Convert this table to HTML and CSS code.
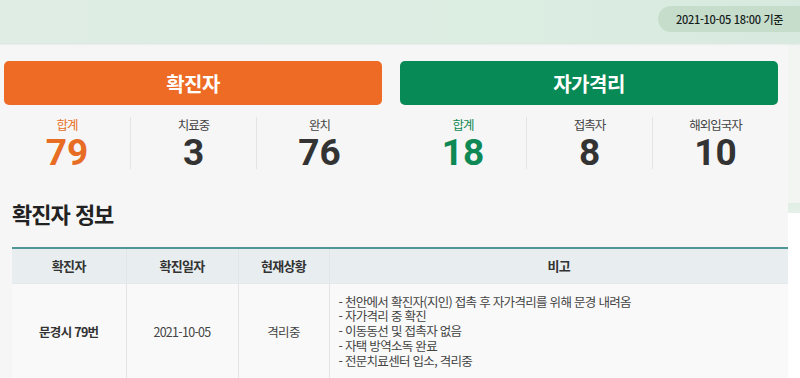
FILE: index.html
```html
<!DOCTYPE html>
<html lang="ko">
<head>
<meta charset="utf-8">
<title>문경시 코로나19 현황</title>
<link rel="stylesheet" href="styles.css">
</head>
<body>
<header class="topbar">
  <span class="pill">2021-10-05 18:00 기준</span>
</header>
<div class="page">
  <main class="content">
    <section class="panels">
      <div class="panel panel-orange">
        <div class="bar">확진자</div>
        <div class="stats">
          <div class="stat stat-total"><span class="label">합계</span><span class="num">79</span></div>
          <div class="stat"><span class="label">치료중</span><span class="num">3</span></div>
          <div class="stat"><span class="label">완치</span><span class="num">76</span></div>
        </div>
      </div>
      <div class="panel panel-green">
        <div class="bar">자가격리</div>
        <div class="stats">
          <div class="stat stat-total"><span class="label">합계</span><span class="num">18</span></div>
          <div class="stat"><span class="label">접촉자</span><span class="num">8</span></div>
          <div class="stat"><span class="label">해외입국자</span><span class="num">10</span></div>
        </div>
      </div>
    </section>
    <h2 class="title">확진자 정보</h2>
    <table class="info">
      <colgroup>
        <col class="c1"><col class="c2"><col class="c3"><col class="c4">
      </colgroup>
      <thead>
        <tr><th>확진자</th><th>확진일자</th><th>현재상황</th><th>비고</th></tr>
      </thead>
      <tbody>
        <tr>
          <td class="name">문경시 79번</td>
          <td>2021-10-05</td>
          <td>격리중</td>
          <td class="remark">
            <p>- 천안에서 확진자(지인) 접촉 후 자가격리를 위해 문경 내려옴</p>
            <p>- 자가격리 중 확진</p>
            <p>- 이동동선 및 접촉자 없음</p>
            <p>- 자택 방역소독 완료</p>
            <p>- 전문치료센터 입소, 격리중</p>
          </td>
        </tr>
      </tbody>
    </table>
  </main>
  <div class="side"></div>
</div>
</body>
</html>
```
FILE: styles.css
```css
* { box-sizing: border-box; }
html, body { margin: 0; padding: 0; }
body {
  width: 800px;
  height: 378px;
  overflow: hidden;
  font-family: "Noto Sans CJK KR", "Noto Sans", sans-serif;
  color: #333;
  background: #f6f6f6;
}
.topbar {
  height: 43px;
  background: linear-gradient(to right, #dfede4, #dcede2 60%, #d8eadf);
  box-shadow: 0 1px 2px rgba(150, 180, 160, 0.35);
  display: flex;
  justify-content: flex-end;
  align-items: flex-start;
  padding-top: 6px;
  position: relative;
  z-index: 1;
}
.pill {
  height: 26px;
  line-height: 26px;
  width: 142px;
  padding-left: 18px;
  border-radius: 13px 0 0 13px;
  background: #c6ddcc;
  font-size: 11px;
  font-weight: 500;
  letter-spacing: -0.3px;
  color: #16211a;
}
.page {
  display: flex;
}
.content {
  width: 788px;
  background: #f6f6f6;
  height: 335px;
}
.side {
  width: 12px;
  height: 335px;
  background: linear-gradient(to bottom, #f3f5f3 0, #f3f5f3 160px, #dfeee4 160px, #e6f1e9 170px, #ffffff 170px);
}
.panels {
  display: grid;
  grid-template-columns: 378px 378px;
  column-gap: 18px;
  padding: 18px 0 0 4px;
}
.bar {
  height: 44px;
  border-radius: 5px;
  color: #fff;
  font-size: 20px;
  font-weight: 700;
  letter-spacing: -0.5px;
  display: flex;
  align-items: center;
  justify-content: center;
}
.panel-orange .bar { background: #ed6b24; }
.panel-green .bar { background: #078a56; }
.stats {
  display: grid;
  grid-template-columns: repeat(3, 1fr);
  margin-top: 12px;
}
.stat {
  display: flex;
  flex-direction: column;
  align-items: center;
  height: 52px;
}
.stat + .stat { border-left: 1px solid #e4e4e4; }
.label {
  font-size: 12.5px;
  line-height: 16px;
  letter-spacing: -1px;
  color: #444;
}
.num {
  font-family: Roboto, "Noto Sans", sans-serif;
  font-weight: 700;
  font-size: 37px;
  line-height: 40px;
  color: #333;
}
.panel-orange .stat-total .label,
.panel-orange .stat-total .num { color: #e86d24; }
.panel-green .stat-total .label,
.panel-green .stat-total .num { color: #0e8854; }
.title {
  margin: 31px 0 0 12px;
  font-size: 22px;
  line-height: 26px;
  font-weight: 700;
  letter-spacing: -1px;
  color: #222;
}
.info {
  margin: 21px 0 0 12px;
  width: 776px;
  border-collapse: collapse;
  table-layout: fixed;
  border-top: 2px solid #4f9696;
  font-size: 12.5px;
  letter-spacing: -0.7px;
}
.c1 { width: 114px; }
.c2 { width: 112px; }
.c3 { width: 91px; }
.c4 { width: 459px; }
.info th {
  height: 35px;
  background: #e8eef0;
  font-weight: 700;
  color: #333;
  font-size: 13px;
  border-left: 1px solid #e2e6e8;
  padding: 0;
}
.info th:first-child, .info td:first-child { border-left: 0; }
.info td {
  background: #f9f9f9;
  text-align: center;
  color: #444;
  border-left: 1px solid #e2e4e6;
  border-top: 1px solid #e6e8ea;
  height: 96px;
  padding: 0;
  vertical-align: top;
  padding-top: 38px;
}
.info td.name { font-weight: 700; color: #333; }
.info td.remark {
  text-align: left;
  padding: 11px 0 0 9px;
}
.remark p {
  margin: 0;
  line-height: 14.8px;
}
```
